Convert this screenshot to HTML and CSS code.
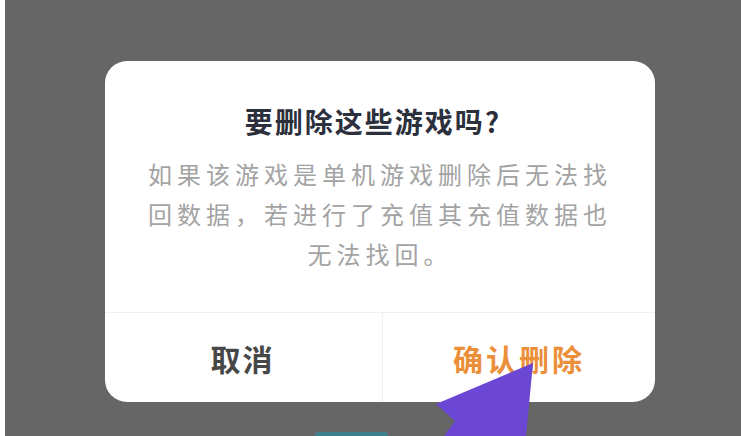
FILE: index.html
```html
<!DOCTYPE html>
<html lang="zh-CN">
<head>
<meta charset="utf-8">
<title>删除游戏</title>
<link rel="stylesheet" href="styles.css">
</head>
<body>
<div class="screen">
  <div class="dialog">
    <h1 class="title">要删除这些游戏吗?</h1>
    <p class="message">如果该游戏是单机游戏删除后无法找回数据，若进行了充值其充值数据也无法找回。</p>
    <div class="actions">
      <button class="btn cancel">取消</button>
      <button class="btn confirm">确认删除</button>
    </div>
  </div>
  <div class="under-button"></div>
  <svg class="pointer" width="741" height="436" viewBox="0 0 741 436">
    <polygon points="533,363 436,404 455,421 444,436 526,436" fill="#6b47d3"/>
  </svg>
</div>
</body>
</html>
```

FILE: styles.css
```css
html, body {
  margin: 0;
  padding: 0;
}
body {
  width: 741px;
  height: 436px;
  overflow: hidden;
  background: #666666;
  font-family: "Noto Sans CJK SC", "Noto Sans", sans-serif;
}
.screen {
  position: relative;
  box-sizing: border-box;
  width: 741px;
  height: 436px;
  border-left: 5px solid #ffffff;
  padding: 61px 0 0 100px;
  overflow: hidden;
}
.dialog {
  width: 550px;
  height: 341px;
  background: #ffffff;
  border-radius: 22px;
  display: flex;
  flex-direction: column;
  overflow: hidden;
}
.title {
  margin: 42px 0 0;
  padding-right: 14px;
  font-size: 28px;
  line-height: 36px;
  font-weight: 700;
  letter-spacing: 2px;
  color: #2c2f3c;
  text-align: center;
}
.message {
  margin: 15px 0 0;
  padding: 0 40px;
  font-size: 24px;
  line-height: 40px;
  letter-spacing: 5px;
  color: #a3a3a3;
  text-align: center;
}
.actions {
  margin-top: auto;
  height: 89px;
  border-top: 1px solid #f0f0f0;
  display: grid;
  grid-template-columns: 277px 1fr;
}
.btn {
  border: 0;
  background: transparent;
  font-family: "Noto Sans CJK SC", "Noto Sans", sans-serif;
  font-size: 30px;
  font-weight: 700;
  letter-spacing: 2px;
  padding: 0;
  margin: 0;
}
.cancel {
  color: #474747;
  padding-right: 2px;
}
.confirm {
  color: #ec8f3a;
  border-left: 1px solid #f0f0f0;
  letter-spacing: 3px;
}
.under-button {
  margin: 30px 0 0 210px;
  width: 73px;
  height: 10px;
  background: #3e808b;
  border-radius: 4px 4px 0 0;
}
.pointer {
  position: absolute;
  left: -5px;
  top: 0;
}
```
